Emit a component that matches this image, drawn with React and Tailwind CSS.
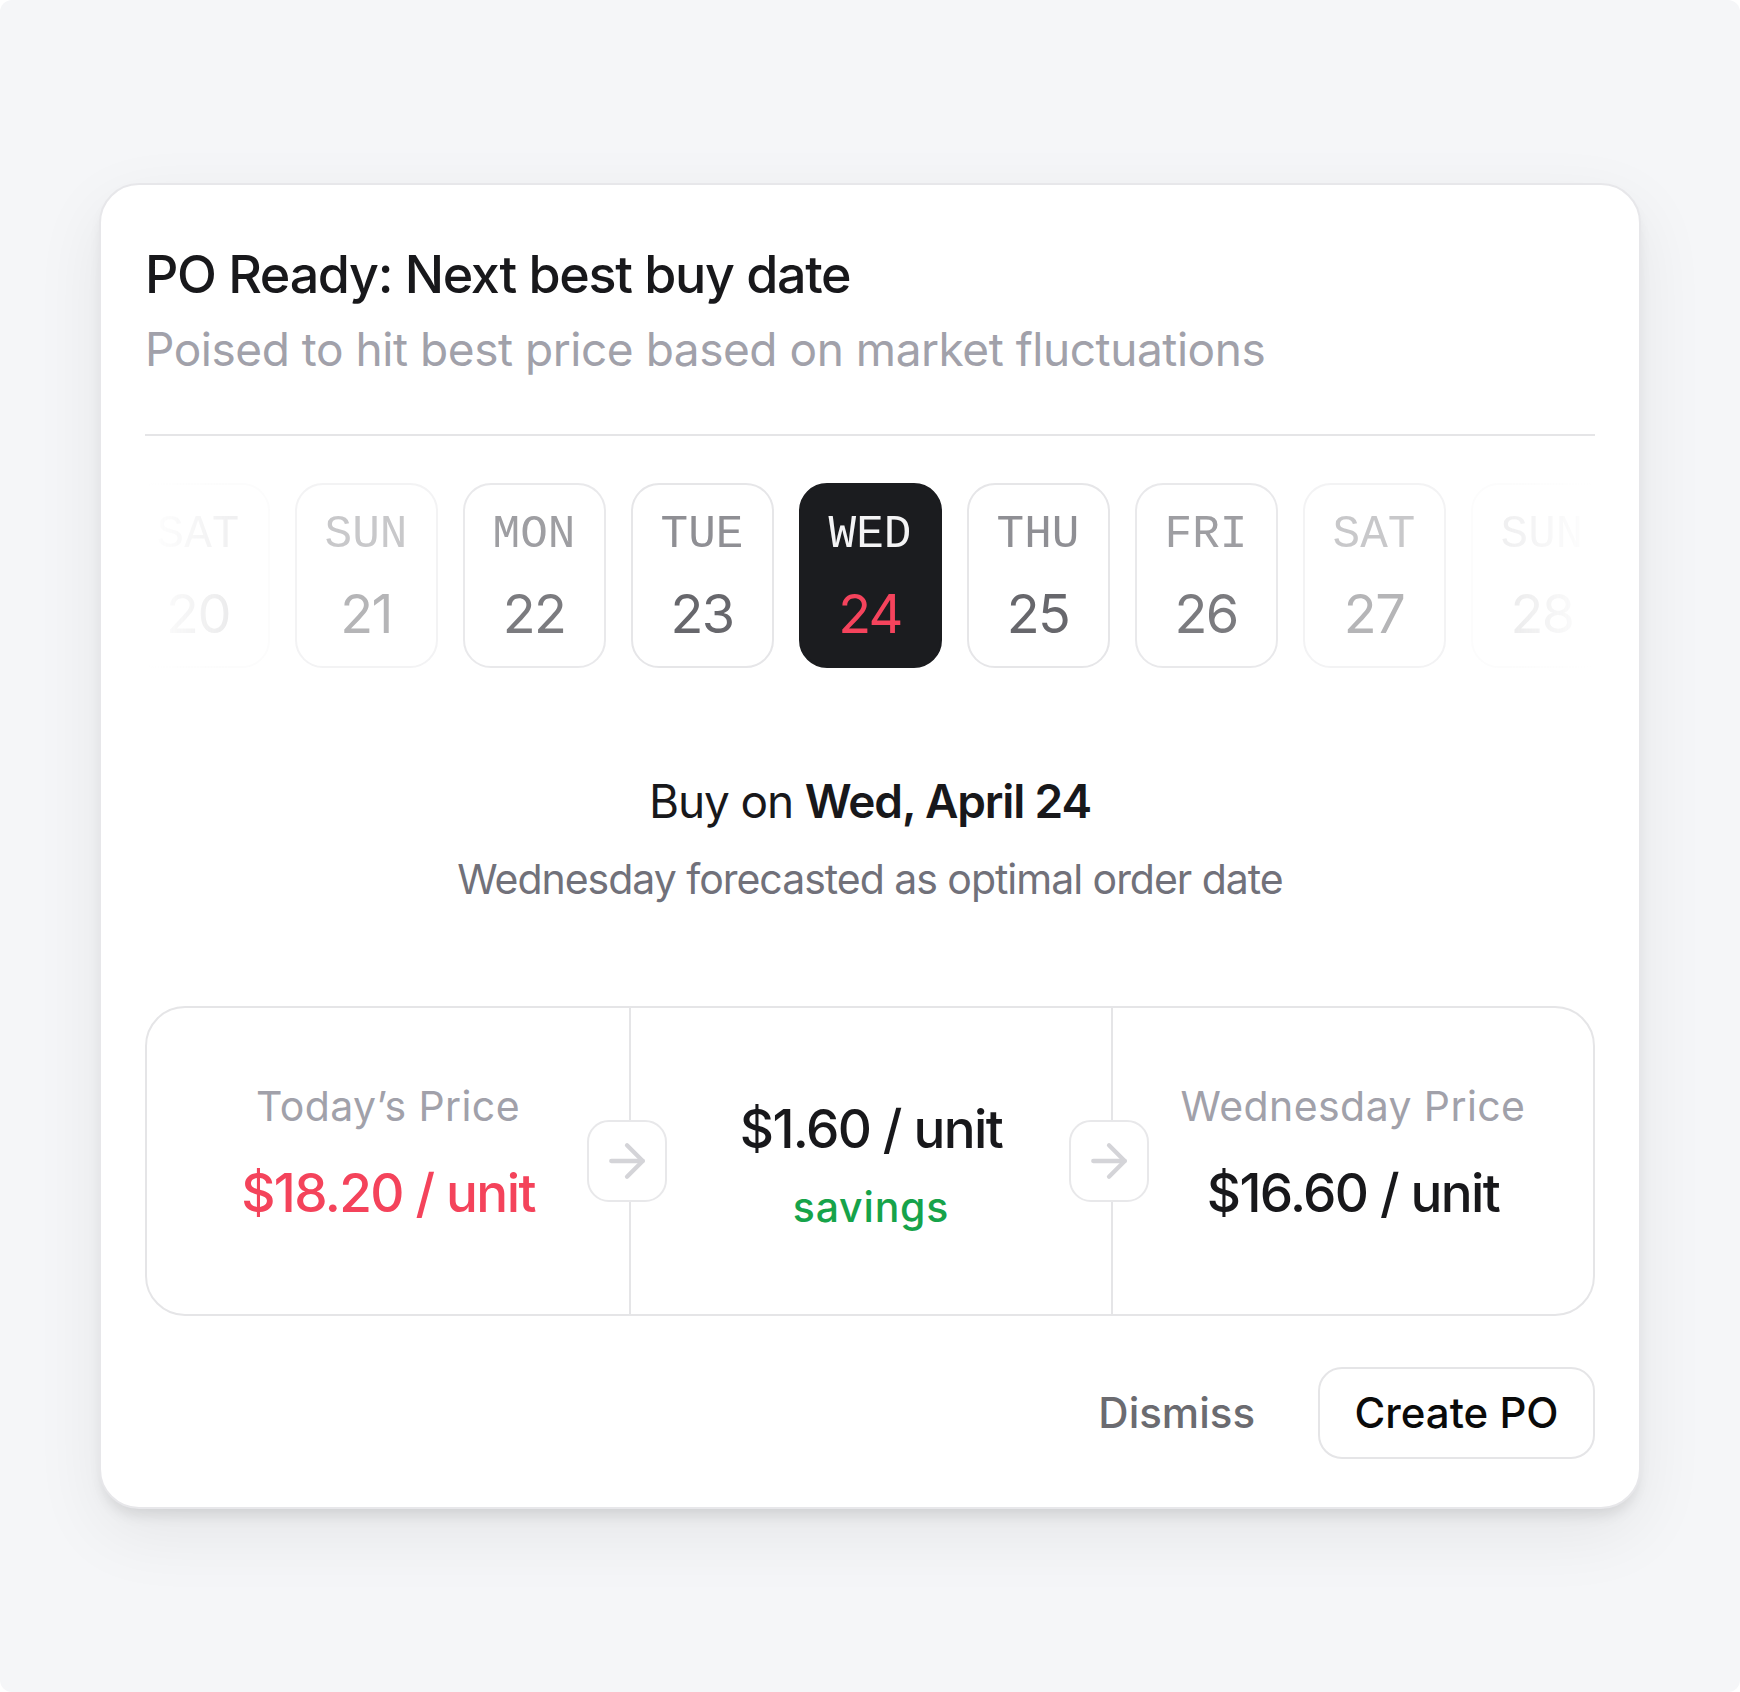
import React from 'react';
import { ArrowRight } from 'lucide-react';

const days = [
  { day: 'SAT', date: 20, fade: 'opacity-[0.12]' },
  { day: 'SUN', date: 21, fade: 'opacity-[0.45]' },
  { day: 'MON', date: 22, fade: 'opacity-[0.8]' },
  { day: 'TUE', date: 23, fade: 'opacity-[0.92]' },
  { day: 'WED', date: 24, active: true },
  { day: 'THU', date: 25, fade: 'opacity-[0.92]' },
  { day: 'FRI', date: 26, fade: 'opacity-[0.8]' },
  { day: 'SAT', date: 27, fade: 'opacity-[0.45]' },
  { day: 'SUN', date: 28, fade: 'opacity-[0.12]' },
];

function DayChip({ day, date, active, fade }) {
  return (
    <div
      className={`flex h-[185px] w-[143px] shrink-0 flex-col items-center rounded-[28px] border-2 pt-[27px] ${
        active ? 'border-[#1b1c1f] bg-[#1b1c1f]' : 'border-[#e4e4e7] bg-white'
      } ${fade || ''}`}
    >
      <span
        className={`font-['Liberation_Mono',monospace] text-[46px] leading-[46px] ${
          active ? 'text-[#f4f4f5]' : 'text-[#86868b]'
        }`}
      >
        {day}
      </span>
      <span
        className={`mt-[29px] text-[54px] leading-[54px] tracking-[-0.03em] ${
          active ? 'text-[#f5435c]' : 'text-[#5b5b60]'
        }`}
      >
        {date}
      </span>
    </div>
  );
}

function Arrow() {
  return (
    <div className="absolute top-1/2 -right-[38px] z-10 flex h-[82px] w-[80px] -translate-y-1/2 items-center justify-center rounded-[22px] border-2 border-[#e8e8ea] bg-white">
      <ArrowRight size={54} strokeWidth={1.9} className="text-[#d4d4d8]" />
    </div>
  );
}

export default function App() {
  return (
    <div className="min-h-screen bg-white font-['Inter',sans-serif]">
      <div className="flex h-[1692px] items-center justify-center rounded-[12px] bg-[#f5f6f8]">
        <div className="w-[1542px] rounded-[40px] border-2 border-[#e7e7ea] bg-white px-[44px] pt-[60px] pb-[48px] shadow-[0_10px_14px_-4px_rgba(0,0,0,0.10),0_24px_70px_rgba(0,0,0,0.07)]">
          <h1 className="text-[52px] leading-[60px] font-medium tracking-[-0.025em] text-[#18181b]">
            PO Ready: Next best buy date
          </h1>
          <p className="mt-[17px] text-[46px] leading-[54px] tracking-[-0.01em] text-[#a1a1aa]">
            Poised to hit best price based on market fluctuations
          </p>
          <div className="mt-[58px] h-[2px] bg-[#e5e5e7]" />

          <div className="mt-[47px] flex justify-center gap-[25px] overflow-hidden [mask-image:linear-gradient(to_right,transparent,black_6%,black_94%,transparent)]">
            {days.map((d) => (
              <DayChip key={`${d.day}-${d.date}`} {...d} />
            ))}
          </div>

          <div className="mt-[105px] text-center text-[46px] leading-[56px] tracking-[-0.025em] text-[#18181b]">
            Buy on <span className="font-semibold">Wed, April 24</span>
          </div>
          <p className="mt-[26px] text-center text-[41px] leading-[48px] tracking-[-0.025em] text-[#71717a]">
            Wednesday forecasted as optimal order date
          </p>

          <div className="mt-[103px] grid h-[310px] grid-cols-3 rounded-[40px] border-2 border-[#e5e5e7]">
            <div className="relative flex flex-col items-center justify-center pb-[16px]">
              <span className="text-[41px] leading-[48px] tracking-[0.01em] text-[#a1a1aa]">Today’s Price</span>
              <span className="mt-[32px] text-[53px] leading-[62px] font-medium tracking-[-0.03em] text-[#f4435b]">
                $18.20 / unit
              </span>
              <Arrow />
            </div>
            <div className="relative flex flex-col items-center justify-center border-l-2 border-[#e5e5e7] pt-[7px]">
              <span className="text-[53px] leading-[62px] font-medium tracking-[-0.03em] text-[#18181b]">
                $1.60 / unit
              </span>
              <span className="mt-[23px] text-[41px] leading-[48px] font-medium tracking-[0.02em] text-[#16a34a]">
                savings
              </span>
              <Arrow />
            </div>
            <div className="flex flex-col items-center justify-center border-l-2 border-[#e5e5e7] pb-[16px]">
              <span className="text-[41px] leading-[48px] tracking-[0.01em] text-[#a1a1aa]">Wednesday Price</span>
              <span className="mt-[32px] text-[53px] leading-[62px] font-medium tracking-[-0.03em] text-[#18181b]">
                $16.60 / unit
              </span>
            </div>
          </div>

          <div className="mt-[51px] flex items-center justify-end gap-[63px]">
            <button className="text-[42px] leading-[48px] font-medium text-[#6b6b70]">Dismiss</button>
            <button className="h-[92px] w-[277px] rounded-[24px] border-2 border-[#e5e5e7] bg-white text-[42px] leading-[48px] font-medium text-[#0a0a0a]">
              Create PO
            </button>
          </div>
        </div>
      </div>
    </div>
  );
}
